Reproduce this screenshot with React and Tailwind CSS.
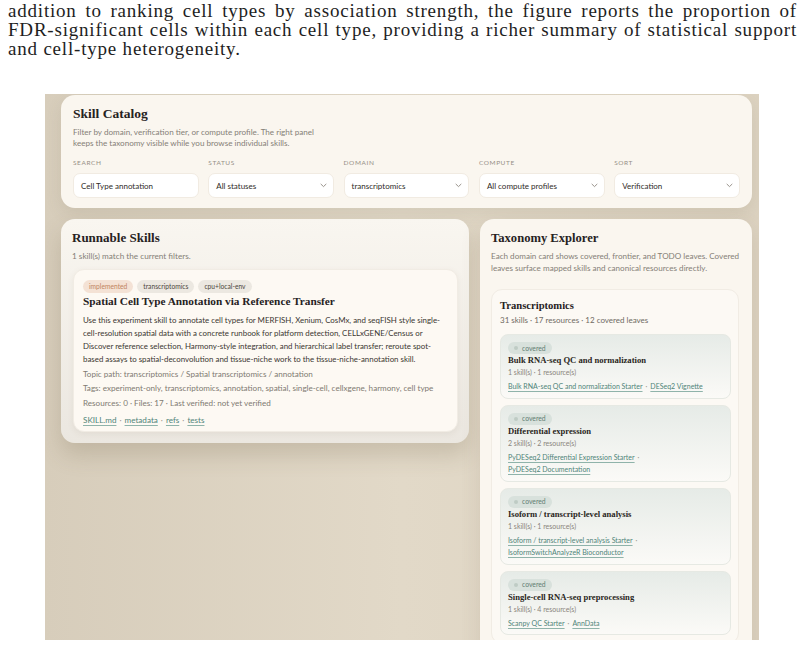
import React from "react";

const sans = "font-['Lato','Open_Sans',sans-serif]";
const serif = "font-['Liberation_Serif','Times_New_Roman',serif]";

function Chevron() {
  return (
    <svg width="7" height="5" viewBox="0 0 7 5" className="shrink-0">
      <path d="M1 1.2 L3.5 3.6 L6 1.2" fill="none" stroke="#8d877f" strokeWidth="0.9" strokeLinecap="round" strokeLinejoin="round" />
    </svg>
  );
}

function Field({ label, value, select }) {
  return (
    <div className="flex flex-col">
      <div className={`${sans} text-[6.5px] leading-[10px] tracking-[0.09em] text-[#968f86] uppercase mb-[5px]`}>{label}</div>
      <div className="h-[25px] rounded-[7px] bg-white border border-[#f1ebe2] flex items-center justify-between pl-[7px] pr-[6px]">
        <span className={`${sans} text-[8px] text-[#2f2b27]`}>{value}</span>
        {select && <Chevron />}
      </div>
    </div>
  );
}

function Badge({ children, tone }) {
  const cls =
    tone === "warm"
      ? "bg-[#f4e2d5] text-[#c1845f]"
      : "bg-[#ece8e1] text-[#4c4740]";
  return (
    <span className={`${sans} ${cls} flex items-center h-[12.5px] px-[6px] rounded-full text-[6.7px] leading-none`}>{children}</span>
  );
}

function Link({ children }) {
  return <span className="text-[#4f8479] underline decoration-[#8fb3aa] underline-offset-[1.5px]">{children}</span>;
}

function Dot() {
  return <span className="text-[#9c968e] mx-[3px]">·</span>;
}

function Leaf({ title, meta, lines }) {
  return (
    <div className="rounded-[8px] border border-[#e6e9e3] bg-gradient-to-b from-[#e6ebe7] to-[#fbfaf7] pt-[7px] pb-[5px] px-[7px]">
      <div className={`${sans} flex w-fit items-center h-[12px] px-[6px] rounded-full bg-[#d8e1dc] text-[#627d73] text-[6.8px] leading-none gap-[4px]`}>
        <span className="w-[4px] h-[4px] rounded-full bg-[#bfcbc4]" />
        covered
      </div>
      <div className={`${serif} font-bold text-[8.6px] leading-[12px] text-[#2a2622]`}>{title}</div>
      <div className={`${sans} text-[7px] leading-[12px] text-[#8a847c]`}>{meta}</div>
      <div className={`${sans} text-[7px] leading-[12.5px] mt-[2px]`}>
        {lines.map((l, i) => (
          <div key={i}>{l}</div>
        ))}
      </div>
    </div>
  );
}

export default function App() {
  return (
    <div className="w-[805px] h-[646px] bg-white overflow-hidden">
      <div className={`${serif} text-[19px] leading-[19px] tracking-[0.8px] text-[#1e1e1e] px-[8px] pt-[1px]`}>
        <div className="text-justify [text-align-last:justify]">addition to ranking cell types by association strength, the figure reports the proportion of</div>
        <div className="text-justify [text-align-last:justify]">FDR-significant cells within each cell type, providing a richer summary of statistical support</div>
        <div>and cell-type heterogeneity.</div>
      </div>

      <div className="ml-[45px] mt-[36px] w-[714px] h-[546px] overflow-hidden bg-gradient-to-r from-[#d7cdbb] via-[#e2d9c8] to-[#dcd2c0] pl-[16px] pr-[7px] pt-[1px]">
        {/* Skill Catalog */}
        <div className="h-[113px] rounded-[14px] bg-[#faf6ef] shadow-[0_6px_16px_rgba(110,95,70,0.12)] px-[12px] pt-[10px]">
          <div className={`${serif} font-bold text-[13.5px] leading-[18px] text-[#26221e]`}>Skill Catalog</div>
          <div className={`${sans} text-[8.1px] leading-[10.5px] text-[#857f77] mt-[4px]`}>
            Filter by domain, verification tier, or compute profile. The right panel
            <br />
            keeps the taxonomy visible while you browse individual skills.
          </div>
          <div className="grid grid-cols-5 gap-[9.5px] mt-[10px]">
            <Field label="Search" value="Cell Type annotation" />
            <Field label="Status" value="All statuses" select />
            <Field label="Domain" value="transcriptomics" select />
            <Field label="Compute" value="All compute profiles" select />
            <Field label="Sort" value="Verification" select />
          </div>
        </div>

        <div className="flex gap-[11px] mt-[11px] items-start">
          {/* Runnable Skills */}
          <div className="w-[408px] h-[224px] rounded-[14px] bg-gradient-to-b from-[#f9f6f0] to-[#ebe7e0] shadow-[0_12px_22px_rgba(110,95,70,0.22)] pl-[11px] pr-[11px] pt-[10px]">
            <div className={`${serif} font-bold text-[13px] leading-[18px] text-[#26221e]`}>Runnable Skills</div>
            <div className={`${sans} text-[8.2px] leading-[12px] text-[#857f77] mt-[3px]`}>1 skill(s) match the current filters.</div>
            <div className="mt-[7px] ml-[1px] rounded-[11px] bg-[#fdf9f3] border border-[#f1ece4] shadow-[0_2px_6px_rgba(110,95,70,0.08)] px-[9px] pt-[10px] pb-[8px] h-[163px]">
              <div className="flex gap-[4px]">
                <Badge tone="warm">implemented</Badge>
                <Badge>transcriptomics</Badge>
                <Badge>cpu+local-env</Badge>
              </div>
              <div className={`${serif} font-bold text-[11.3px] leading-[17px] text-[#26221e]`}>Spatial Cell Type Annotation via Reference Transfer</div>
              <div className={`${sans} text-[7.9px] leading-[13.3px] text-[#3a3631] mt-[4px]`}>
                Use this experiment skill to annotate cell types for MERFISH, Xenium, CosMx, and seqFISH style single-cell-resolution spatial data with a concrete runbook for platform detection, CELLxGENE/Census or Discover reference selection, Harmony-style integration, and hierarchical label transfer; reroute spot-based assays to spatial-deconvolution and tissue-niche work to the tissue-niche-annotation skill.
              </div>
              <div className={`${sans} text-[8.1px] leading-[14.5px] text-[#807a72] whitespace-nowrap`}>
                <div>Topic path: transcriptomics / Spatial transcriptomics / annotation</div>
                <div>Tags: experiment-only, transcriptomics, annotation, spatial, single-cell, cellxgene, harmony, cell type</div>
                <div>Resources: 0 · Files: 17 · Last verified: not yet verified</div>
              </div>
              <div className={`${sans} text-[8.1px] leading-[14px] mt-[3px]`}>
                <Link>SKILL.md</Link><Dot /><Link>metadata</Link><Dot /><Link>refs</Link><Dot /><Link>tests</Link>
              </div>
            </div>
          </div>

          {/* Taxonomy Explorer */}
          <div className="w-[272px] h-[460px] rounded-[14px] bg-[#faf6ef] shadow-[0_8px_20px_rgba(110,95,70,0.14)] pl-[11px] pr-[13px] pt-[10px]">
            <div className={`${serif} font-bold text-[12.6px] leading-[18px] text-[#26221e]`}>Taxonomy Explorer</div>
            <div className={`${sans} text-[8.1px] leading-[12px] text-[#857f77] mt-[3px]`}>
              Each domain card shows covered, frontier, and TODO leaves. Covered leaves surface mapped skills and canonical resources directly.
            </div>
            <div className="mt-[15px] rounded-[11px] bg-[#fcf9f4] border border-[#f1ece4] pl-[8px] pr-[7px] pt-[8px] pb-[8px]">
              <div className={`${serif} font-bold text-[10.6px] leading-[16px] text-[#26221e]`}>Transcriptomics</div>
              <div className={`${sans} text-[8px] leading-[12px] text-[#6f6a63]`}>31 skills · 17 resources · 12 covered leaves</div>
              <div className="mt-[8px] flex flex-col gap-[6px]">
                <Leaf
                  title="Bulk RNA-seq QC and normalization"
                  meta="1 skill(s) · 1 resource(s)"
                  lines={[<span key="a"><Link>Bulk RNA-seq QC and normalization Starter</Link><Dot /><Link>DESeq2 Vignette</Link></span>]}
                />
                <Leaf
                  title="Differential expression"
                  meta="2 skill(s) · 2 resource(s)"
                  lines={[<span key="a"><Link>PyDESeq2 Differential Expression Starter</Link><Dot /></span>, <Link key="b">PyDESeq2 Documentation</Link>]}
                />
                <Leaf
                  title="Isoform / transcript-level analysis"
                  meta="1 skill(s) · 1 resource(s)"
                  lines={[<span key="a"><Link>Isoform / transcript-level analysis Starter</Link><Dot /></span>, <Link key="b">IsoformSwitchAnalyzeR Bioconductor</Link>]}
                />
                <Leaf
                  title="Single-cell RNA-seq preprocessing"
                  meta="1 skill(s) · 4 resource(s)"
                  lines={[<span key="a"><Link>Scanpy QC Starter</Link><Dot /><Link>AnnData</Link></span>]}
                />
              </div>
            </div>
          </div>
        </div>
      </div>
    </div>
  );
}
